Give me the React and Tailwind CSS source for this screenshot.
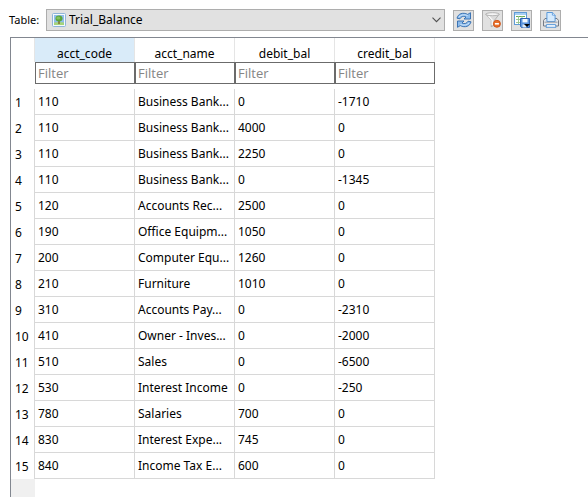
import React from "react";

const columns = ["acct_code", "acct_name", "debit_bal", "credit_bal"];

const rows = [
  ["110", "Business Bank...", "0", "-1710"],
  ["110", "Business Bank...", "4000", "0"],
  ["110", "Business Bank...", "2250", "0"],
  ["110", "Business Bank...", "0", "-1345"],
  ["120", "Accounts Rec...", "2500", "0"],
  ["190", "Office Equipm...", "1050", "0"],
  ["200", "Computer Equ...", "1260", "0"],
  ["210", "Furniture", "1010", "0"],
  ["310", "Accounts Pay...", "0", "-2310"],
  ["410", "Owner - Inves...", "0", "-2000"],
  ["510", "Sales", "0", "-6500"],
  ["530", "Interest Income", "0", "-250"],
  ["780", "Salaries", "700", "0"],
  ["830", "Interest Expe...", "745", "0"],
  ["840", "Income Tax E...", "600", "0"],
];

function TableIcon() {
  return (
    <svg viewBox="0 0 14 14" className="h-3.5 w-3.5" aria-hidden="true">
      <rect x="0.5" y="0.5" width="13" height="13" rx="1" fill="#f4f9fd" stroke="#8fb4d8" />
      <rect x="2" y="2" width="10" height="10" fill="#8fbdeb" />
      <path d="M2 9.5 Q7 8.5 12 9.5 V12 H2Z" fill="#a5d47a" />
      <path d="M6.3 8 H7.7 V11 H6.3Z" fill="#80632d" />
      <ellipse cx="7" cy="5.6" rx="3.5" ry="3" fill="#5aa53a" />
      <ellipse cx="6.3" cy="5" rx="2" ry="1.5" fill="#86c35c" />
    </svg>
  );
}

function RefreshIcon() {
  return (
    <svg viewBox="0 0 16 16" className="h-4 w-4" aria-hidden="true">
      <g fill="#8dbcec" stroke="#2f6aae" strokeWidth="0.9" strokeLinejoin="round">
        <path d="M1 6.2 C2 1.6 7 0 11.7 2.4 L14.5 0.7 V7 H8 L10 5 C7.5 3.6 5 4.6 4 6.8Z" />
        <path d="M15 9.8 C14 14.4 9 16 4.3 13.6 L1.5 15.3 V9 H8 L6 11 C8.5 12.4 11 11.4 12 9.2Z" />
      </g>
      <path d="M2.8 5 Q6 1.6 11.7 3.5 M13.2 11 Q10 14.4 4.3 12.5" fill="none" stroke="#d5e8fa" strokeWidth="0.9" />
    </svg>
  );
}

function ClearFilterIcon() {
  return (
    <svg viewBox="0 0 16 16" className="h-4 w-4" aria-hidden="true">
      <path d="M0.8 2.2 L6.2 8.2 V14.8 L9.6 13 V8.2 L14.2 2.2Z" fill="#dcdcdc" stroke="#a6a6a6" strokeWidth="0.8" />
      <path d="M3.5 4 L7.2 8 V13" fill="none" stroke="#fafafa" strokeWidth="1.3" />
      <ellipse cx="7.5" cy="2.2" rx="6.7" ry="1.5" fill="#f5f5f5" stroke="#a8a8a8" strokeWidth="0.8" />
      <circle cx="11.9" cy="11.8" r="3.5" fill="#e8702a" stroke="#cf4f12" strokeWidth="0.9" />
      <rect x="9.9" y="11" width="4" height="1.6" fill="#fff" />
    </svg>
  );
}

function SaveTableIcon() {
  return (
    <svg viewBox="0 0 16 16" className="h-4 w-4" aria-hidden="true">
      <rect x="0.5" y="0.5" width="12" height="12" fill="#fff" stroke="#5f9bd6" />
      <path d="M1 2H12" stroke="#a6cff3" strokeWidth="2" />
      <path d="M2 4.5H11" stroke="#68ad52" strokeWidth="1" />
      <path d="M2 7.5H11 M2 10.5H8 M4.5 4V12 M8 4V8" stroke="#93c38c" strokeWidth="0.9" />
      <path d="M6.5 6.5 H15.5 V15.5 H7.5 L6.5 14.5Z" fill="#5b94dc" stroke="#2d62b1" />
      <rect x="8.5" y="7" width="5" height="3.4" fill="#f4f9ff" />
      <rect x="8.5" y="12.5" width="4" height="3" fill="#dce9f7" />
      <path d="M10 12 H16 L13 15Z" fill="#000" />
    </svg>
  );
}

function PrintIcon() {
  return (
    <svg viewBox="0 0 16 16" className="h-4 w-4" aria-hidden="true">
      <path d="M2 6.5 H14 L15.5 8.5 V14 H0.5 V8.5Z" fill="#e3e5e8" stroke="#696f7b" strokeWidth="0.9" />
      <path d="M3.9 9.5 V0.5 H9.5 L12.1 3 V9.5Z" fill="#d5eafd" stroke="#4c91d7" strokeWidth="0.9" />
      <path d="M9.4 0.7 V3.1 H12" fill="#fff" stroke="#4c91d7" strokeWidth="0.8" />
      <path d="M1.5 10.2 H14.5" stroke="#9a9fa8" strokeWidth="1" />
      <path d="M3.5 12.6 H12.5 L13 15.3 H3Z" fill="#f3f8fd" stroke="#4c91d7" strokeWidth="0.9" />
    </svg>
  );
}

const tools = [
  { label: "Refresh", Icon: RefreshIcon },
  { label: "Clear filters", Icon: ClearFilterIcon },
  { label: "Save table", Icon: SaveTableIcon },
  { label: "Print", Icon: PrintIcon },
];

export default function App() {
  return (
    <main className="flex h-screen flex-col overflow-hidden bg-white font-['Noto_Sans','DejaVu_Sans',sans-serif] text-[12px] leading-4 text-black">
      <div className="flex items-center gap-2 pt-[9px] pr-[27px] pb-1.5 pl-[9px]">
        <div className="flex min-w-0 flex-1 items-center">
          <label htmlFor="table" className="w-[37px] shrink-0 whitespace-nowrap text-[11px]">
            Table:
          </label>
          <div className="relative min-w-0 flex-1">
            <select
              id="table"
              className="block h-[22px] w-full appearance-none border border-[#adadad] bg-[#e1e1e1] pr-5 pl-[22px] text-[12px]"
            >
              <option>Trial_Balance</option>
            </select>
            <span className="pointer-events-none absolute inset-y-0 left-1.5 flex items-center">
              <TableIcon />
            </span>
            <svg
              viewBox="0 0 9 6"
              className="pointer-events-none absolute inset-y-0 right-1 my-auto h-1.5 w-[9px]"
              aria-hidden="true"
            >
              <path d="M0.5 0.7 L4.5 4.7 L8.5 0.7" fill="none" stroke="#505050" strokeWidth="1.1" />
            </svg>
          </div>
        </div>
        {tools.map(({ label, Icon }) => (
          <button
            key={label}
            type="button"
            aria-label={label}
            className="flex h-[21px] w-[21px] shrink-0 items-center justify-center border border-[#adadad] bg-[#e1e1e1]"
          >
            <Icon />
          </button>
        ))}
      </div>

      <div className="ml-2.5 flex min-h-0 flex-1 flex-col items-start overflow-hidden border-t border-l border-[#828790]">
        <table className="w-[424px] shrink-0 table-fixed border-separate border-spacing-0">
          <colgroup>
            <col className="w-6" />
            <col />
            <col />
            <col />
            <col />
          </colgroup>
          <thead>
            <tr>
              <td className="border-r border-[#e5e5e5] p-0" />
              {columns.map((name, i) => (
                <th
                  key={name}
                  scope="col"
                  className={`h-6 border-r border-[#e5e5e5] p-0 pt-2 text-center font-normal ${i === 0 ? "bg-[#d9ebf9]" : ""}`}
                >
                  {name}
                </th>
              ))}
            </tr>
            <tr>
              <td className="p-0" />
              {columns.map((name) => (
                <td key={name} className="p-0 pb-[5px]">
                  <input
                    type="text"
                    placeholder="Filter"
                    aria-label={`Filter ${name}`}
                    className="block h-[22px] w-full border border-[#6b6b6b] bg-white px-0.5 font-['Open_Sans',sans-serif] text-[13px] placeholder:text-[#858585]"
                  />
                </td>
              ))}
            </tr>
          </thead>
          <tbody>
            {rows.map((row, r) => (
              <tr key={r} className="h-[26px]">
                <th scope="row" className="border-r border-[#d8d8d8] p-0 pt-0.5 pl-1 text-left font-normal">
                  {r + 1}
                </th>
                {row.map((value, c) => (
                  <td key={c} className="overflow-hidden border-r border-b border-[#d8d8d8] p-0 pl-[3px] whitespace-nowrap">
                    {value}
                  </td>
                ))}
              </tr>
            ))}
          </tbody>
        </table>
        <div className="w-6 flex-1 bg-[#f0f0f0]" />
      </div>
    </main>
  );
}
